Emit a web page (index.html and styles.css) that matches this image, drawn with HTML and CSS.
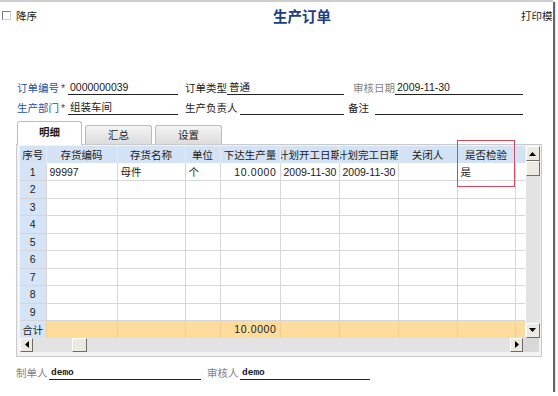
FILE: index.html
```html
<!DOCTYPE html>
<html lang="zh-CN">
<head>
    <meta charset="UTF-8">
    <title>生产订单</title>
    <link rel="stylesheet" href="styles.css">
</head>
<body>
    <div class="frame">
        <div class="topbar">
            <label class="sort"><span class="check"></span>降序</label>
            <h1 class="title">生产订单</h1>
            <span class="print">打印模板</span>
        </div>

        <div class="head">
            <div class="row">
                <div class="field fa"><span class="lbl req">订单编号</span><span class="star">*</span><span class="line">0000000039</span></div>
                <div class="field fb"><span class="lbl">订单类型</span><span class="line">普通</span></div>
                <div class="field fc"><span class="lbl muted">审核日期</span><span class="line">2009-11-30</span></div>
            </div>
            <div class="row">
                <div class="field fa"><span class="lbl req">生产部门</span><span class="star">*</span><span class="line">组装车间</span></div>
                <div class="field fb"><span class="lbl wide">生产负责人</span><span class="line"></span></div>
                <div class="field fc fc2"><span class="lbl short">备注</span><span class="line"></span></div>
            </div>
        </div>

        <div class="tabs">
            <div class="tab active">明细</div>
            <div class="tab">汇总</div>
            <div class="tab">设置</div>
        </div>

        <div class="grid">
            <div class="grid-main">
                <table class="sheet">
                    <colgroup>
                        <col style="width:26px"><col style="width:71px"><col style="width:68px"><col style="width:35px">
                        <col style="width:60px"><col style="width:59px"><col style="width:59px"><col style="width:59px">
                        <col style="width:58px"><col style="width:10px">
                    </colgroup>
                    <thead>
                        <tr>
                            <th><div class="hc">序号</div></th>
                            <th><div class="hc">存货编码</div></th>
                            <th><div class="hc">存货名称</div></th>
                            <th><div class="hc">单位</div></th>
                            <th><div class="hc">下达生产量</div></th>
                            <th><div class="hc">计划开工日期</div></th>
                            <th><div class="hc">计划完工日期</div></th>
                            <th><div class="hc">关闭人</div></th>
                            <th><div class="hc">是否检验</div></th>
                            <th></th>
                        </tr>
                    </thead>
                    <tbody>
                        <tr><td class="no">1</td><td>99997</td><td>母件</td><td>个</td><td class="num">10.0000</td><td>2009-11-30</td><td>2009-11-30</td><td></td><td>是</td><td class="fill"></td></tr>
                        <tr><td class="no">2</td><td></td><td></td><td></td><td></td><td></td><td></td><td></td><td></td><td class="fill"></td></tr>
                        <tr><td class="no">3</td><td></td><td></td><td></td><td></td><td></td><td></td><td></td><td></td><td class="fill"></td></tr>
                        <tr><td class="no">4</td><td></td><td></td><td></td><td></td><td></td><td></td><td></td><td></td><td class="fill"></td></tr>
                        <tr><td class="no">5</td><td></td><td></td><td></td><td></td><td></td><td></td><td></td><td></td><td class="fill"></td></tr>
                        <tr><td class="no">6</td><td></td><td></td><td></td><td></td><td></td><td></td><td></td><td></td><td class="fill"></td></tr>
                        <tr><td class="no">7</td><td></td><td></td><td></td><td></td><td></td><td></td><td></td><td></td><td class="fill"></td></tr>
                        <tr><td class="no">8</td><td></td><td></td><td></td><td></td><td></td><td></td><td></td><td></td><td class="fill"></td></tr>
                        <tr><td class="no">9</td><td></td><td></td><td></td><td></td><td></td><td></td><td></td><td></td><td class="fill"></td></tr>
                    </tbody>
                    <tfoot>
                        <tr><td class="no">合计</td><td></td><td></td><td></td><td class="num">10.0000</td><td></td><td></td><td></td><td></td><td class="fill"></td></tr>
                    </tfoot>
                </table>
                <div class="vscroll">
                    <div class="btn"><svg width="7" height="4"><polygon points="0,4 3.5,0 7,4" fill="#000"/></svg></div>
                    <div class="btn thumb"></div>
                    <div class="track"></div>
                    <div class="btn"><svg width="7" height="4"><polygon points="0,0 7,0 3.5,4" fill="#000"/></svg></div>
                </div>
            </div>
            <div class="hscroll">
                <div class="htrack">
                    <div class="btn"><svg width="4" height="7"><polygon points="4,0 4,7 0,3.5" fill="#000"/></svg></div>
                    <div class="btn hthumb"></div>
                    <div class="btn right"><svg width="4" height="7"><polygon points="0,0 4,3.5 0,7" fill="#000"/></svg></div>
                </div>
                <div class="corner"></div>
            </div>
            <div class="mark"></div>
        </div>

        <div class="footer">
            <span class="lbl muted">制单人</span><span class="line sign">demo</span>
            <span class="lbl muted second">审核人</span><span class="line sign short">demo</span>
        </div>
    </div>
</body>
</html>
```

FILE: styles.css
```css
body {
    margin: 0;
    background-color: #fff;
    font-family: "Liberation Sans", "Noto Sans CJK SC", sans-serif;
    font-size: 10.5px;
    color: #1a1a1a;
}
.frame {
    width: 553px;
    height: 392px;
    box-sizing: border-box;
    border-top: 2px solid #cfcfcf;
    box-shadow: 2px 2px 1px #666;
    overflow: hidden;
    background-color: #fff;
}

/* top bar */
.topbar {
    display: flex;
    align-items: center;
    height: 26px;
}
.sort {
    flex: none;
    display: flex;
    align-items: center;
    margin-left: 2px;
    width: 271px;
}
.check {
    width: 7px;
    height: 7px;
    border: 1px solid #7a7a7a;
    border-right-color: #d0d0d0;
    border-bottom-color: #d0d0d0;
    background-color: #fff;
    margin-right: 5px;
}
.title {
    flex: none;
    margin: 0;
    width: 248px;
    font-size: 14.5px;
    font-weight: bold;
    color: #1d3c86;
    white-space: nowrap;
}
.print {
    flex: none;
    white-space: nowrap;
}

/* header fields */
.head {
    padding: 53px 0 0 17px;
}
.row {
    display: flex;
    align-items: flex-end;
    height: 14px;
    margin-bottom: 6px;
}
.field {
    display: flex;
    align-items: flex-end;
}
.fa { width: 161px; }
.fb { width: 159px; margin-left: 7px; }
.fc { width: 170px; margin-left: 9px; }
.fc2 { width: 175px; margin-left: 4px; }
.lbl {
    flex: none;
    line-height: 13px;
    white-space: nowrap;
    width: 42px;
}
.lbl.wide { width: 55px; }
.lbl.short { width: 27px; }
.req { color: #2353a6; width: 44px; }
.muted { color: #858585; }
.star {
    flex: none;
    width: 7px;
    color: #3a4a78;
    line-height: 13px;
}
.line {
    flex: 1;
    height: 13px;
    line-height: 13px;
    border-bottom: 1px solid #222;
    padding-left: 2px;
    white-space: nowrap;
}

/* tabs */
.tabs {
    display: flex;
    align-items: flex-end;
    height: 23px;
    margin-top: 5px;
    padding-left: 17px;
    position: relative;
    z-index: 1;
}
.tab {
    width: 67px;
    height: 19px;
    box-sizing: border-box;
    margin-left: 3px;
    border: 1px solid #bcbcbc;
    border-bottom: none;
    border-radius: 3px 3px 0 0;
    background: linear-gradient(#f4f4f4, #dcdcdc);
    text-align: center;
    line-height: 18px;
}
.tab.active {
    width: 65px;
    height: 24px;
    margin-left: 0;
    margin-bottom: -1px;
    background: #fff;
    font-weight: bold;
    line-height: 20px;
}

/* grid */
.grid {
    position: relative;
    margin-left: 16px;
    width: 526px;
    box-sizing: border-box;
    border: 1px solid #c9c9c9;
    padding: 1px 2px 4px 3px;
    background-color: #f3f3f3;
}
.grid-main {
    display: flex;
}
.sheet {
    width: 505px;
    table-layout: fixed;
    border-collapse: collapse;
    background-color: #fff;
}
.sheet th, .sheet td {
    padding: 0 3px;
    white-space: nowrap;
    overflow: hidden;
    font-weight: normal;
    text-align: left;
}
.sheet th {
    height: 17px;
    padding: 0;
    background-color: #d3e3f5;
    border-right: 1px solid #e4ecf7;
}
.hc {
    display: flex;
    justify-content: center;
    overflow: hidden;
}
.sheet td {
    height: 17.5px;
    box-sizing: border-box;
    border-right: 1px solid #d6d6d6;
    border-bottom: 1px solid #d6d6d6;
}
.sheet td.no {
    background-color: #d5e5f7;
    text-align: center;
    padding: 0;
}
.sheet td.num {
    text-align: right;
    letter-spacing: 0.6px;
}
.sheet td.fill {
    border-right: none;
}
.sheet tfoot td {
    height: 17px;
    background-color: #fddc9e;
    border-right-color: #f1cf93;
    border-bottom: none;
}
.sheet tfoot td.no {
    background-color: #d5e5f7;
}

/* scrollbars */
.btn {
    width: 14px;
    height: 15px;
    box-sizing: border-box;
    background-color: #ece9e2;
    border: 1px solid;
    border-color: #fff #6d6d6d #6d6d6d #fff;
    display: flex;
    align-items: center;
    justify-content: center;
}
.vscroll {
    width: 14px;
    display: flex;
    flex-direction: column;
    background-color: #e3e3e3;
}
.vscroll .track {
    flex: 1;
}
.hscroll {
    display: flex;
    height: 14px;
}
.htrack {
    flex: 1;
    display: flex;
    background-color: #e3e3e3;
}
.htrack .btn {
    width: 13px;
    height: 14px;
}
.htrack .hthumb {
    width: 15px;
    margin-left: 39px;
}
.htrack .right {
    margin-left: auto;
}
.corner {
    width: 16px;
    background-color: #d9d9d9;
}
.mark {
    position: absolute;
    left: 440px;
    top: -5px;
    width: 58px;
    height: 47px;
    box-sizing: border-box;
    border: 1px solid #d9475a;
}

/* footer */
.footer {
    display: flex;
    align-items: flex-end;
    height: 14px;
    margin-top: 9px;
    padding-left: 16px;
}
.footer .lbl {
    width: 33px;
}
.footer .second {
    margin-left: 6px;
}
.sign {
    flex: none;
    width: 150px;
    font-family: "Liberation Mono", monospace;
    font-size: 9.5px;
    font-weight: bold;
}
.sign.short {
    width: 128px;
}
```
